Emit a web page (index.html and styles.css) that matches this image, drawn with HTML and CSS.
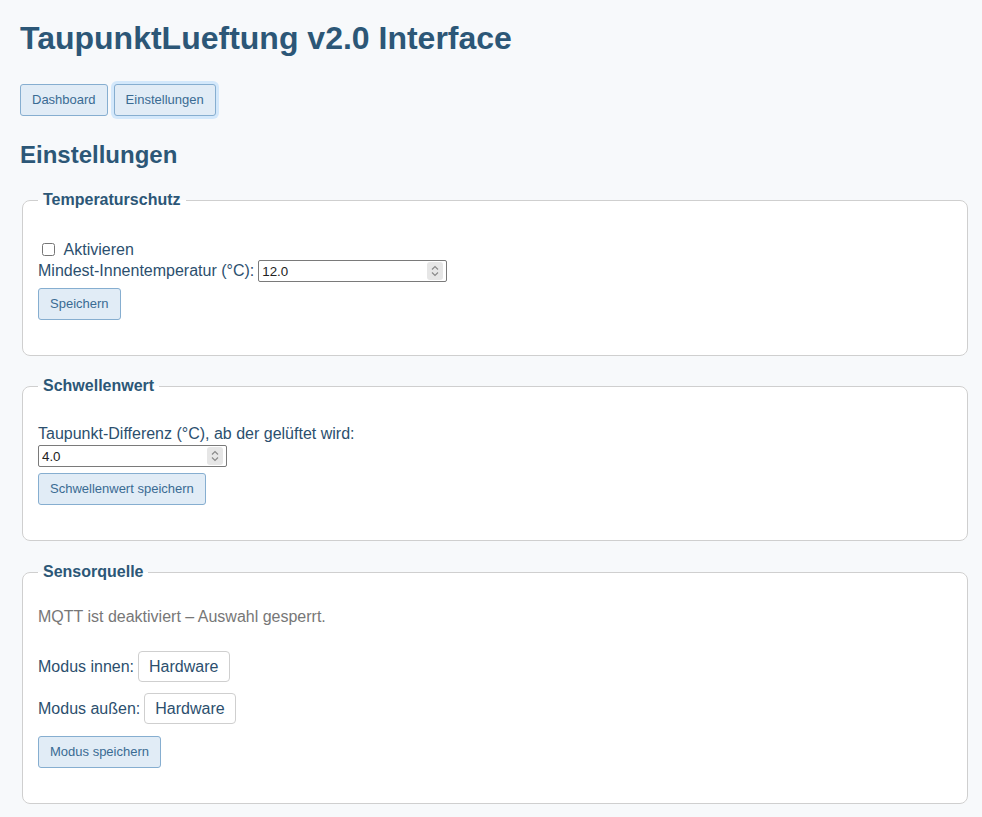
FILE: index.html
```html
<!DOCTYPE html>
<html lang="de">
<head>
<meta charset="utf-8">
<title>TaupunktLueftung v2.0 Interface</title>
<link rel="stylesheet" href="styles.css">
</head>
<body>
<h1 class="title">TaupunktLueftung v2.0 Interface</h1>
<nav class="nav">
  <button class="btn">Dashboard</button>
  <button class="btn btn-focus">Einstellungen</button>
</nav>
<h2 class="section-title">Einstellungen</h2>

<fieldset class="card">
  <legend class="card-legend">Temperaturschutz</legend>
  <div class="check-row"><label class="check-label"><input type="checkbox" class="check"> Aktivieren</label></div>
  <div class="field-row">
    <label class="field-label">Mindest-Innentemperatur (°C):</label>
    <span class="num"><input class="num-input" type="number" value="12.0" step="0.1"><span class="spin"><svg width="10" height="14" viewBox="0 0 10 14"><path d="M2 5.5 L5 2.5 L8 5.5" fill="none" stroke="#8a8a8a" stroke-width="1.2"/><path d="M2 8.5 L5 11.5 L8 8.5" fill="none" stroke="#8a8a8a" stroke-width="1.2"/></svg></span></span>
  </div>
  <button class="btn btn-save">Speichern</button>
</fieldset>

<fieldset class="card card-gap">
  <legend class="card-legend">Schwellenwert</legend>
  <label class="block-label">Taupunkt-Differenz (°C), ab der gelüftet wird:</label>
  <span class="num num-block"><input class="num-input" type="number" value="4.0" step="0.1"><span class="spin"><svg width="10" height="14" viewBox="0 0 10 14"><path d="M2 5.5 L5 2.5 L8 5.5" fill="none" stroke="#8a8a8a" stroke-width="1.2"/><path d="M2 8.5 L5 11.5 L8 8.5" fill="none" stroke="#8a8a8a" stroke-width="1.2"/></svg></span></span>
  <button class="btn btn-save">Schwellenwert speichern</button>
</fieldset>

<fieldset class="card">
  <legend class="card-legend">Sensorquelle</legend>
  <p class="note">MQTT ist deaktiviert – Auswahl gesperrt.</p>
  <div class="mode-row first"><label class="mode-label">Modus innen:</label><select class="mode" disabled><option>Hardware</option></select></div>
  <div class="mode-row"><label class="mode-label">Modus außen:</label><select class="mode" disabled><option>Hardware</option></select></div>
  <button class="btn btn-save btn-mode">Modus speichern</button>
</fieldset>
</body>
</html>
```

FILE: styles.css
```css
html { background: #f7f9fb; }
body {
  margin: 0;
  padding: 20px 12px 10px 20px;
  font-family: "Liberation Sans", Arial, sans-serif;
  font-size: 16px;
  color: #2c4f6e;
  background: #f7f9fb;
}
.title {
  margin: 0 0 27px;
  font-size: 32px;
  font-weight: bold;
  color: #2c5777;
}
.nav {
  display: flex;
  gap: 6px;
  margin-bottom: 25px;
}
.btn {
  font-family: "Liberation Sans", Arial, sans-serif;
  font-size: 13px;
  line-height: 14px;
  padding: 8px 11px;
  color: #3a6b93;
  background: #e1ecf6;
  border: 1px solid #86aed0;
  border-radius: 3px;
  cursor: pointer;
}
.btn-focus {
  box-shadow: 0 0 0 3px #d3e8fb;
}
.section-title {
  margin: 0 0 22px;
  font-size: 24px;
  font-weight: bold;
  color: #2c5777;
}
.card {
  margin: 0 2px 21px;
  padding: 0 15px 35px;
  border: 1px solid #cfcfcf;
  border-radius: 8px;
  background: #fff;
}
.card-gap { margin-bottom: 22px; }
.card-legend {
  padding: 0 5px;
  font-size: 16px;
  font-weight: bold;
  color: #2c5777;
}
.check-row { margin-top: 32px; }
.check-label { color: #2c4f6e; }
.check { margin: 0 5px 0 4px; width: 13px; height: 13px; vertical-align: -1px; }
.field-row { display: flex; align-items: center; gap: 4px; margin-top: 1px; height: 22px; }
.num { position: relative; display: inline-block; width: 189px; height: 22px; }
.num-block { display: block; margin-top: 2px; }
.num-input {
  box-sizing: border-box;
  width: 100%;
  height: 22px;
  padding: 0 20px 0 3px;
  font-family: "Liberation Sans", Arial, sans-serif;
  font-size: 13.33px;
  color: #222;
  background: #fff;
  border: 1px solid #7a7a7a;
  border-radius: 2px;
  -moz-appearance: textfield;
}
.num-input::-webkit-inner-spin-button,
.num-input::-webkit-outer-spin-button { -webkit-appearance: none; margin: 0; }
.spin {
  position: absolute;
  right: 4px;
  top: 2px;
  width: 16px;
  height: 18px;
  background: #e6e6e6;
  border-radius: 3px;
  display: flex;
  align-items: center;
  justify-content: center;
  pointer-events: none;
}
.btn-save { display: block; margin-top: 6px; }
.block-label { display: block; margin-top: 30px; }
.note { margin: 27px 0 0; color: #777; }
.mode-row { display: flex; align-items: center; gap: 4px; margin-top: 11px; }
.mode-row.first { margin-top: 25px; }
.mode {
  -webkit-appearance: none;
  appearance: none;
  height: 31px;
  padding: 0 10px;
  font-family: "Liberation Sans", Arial, sans-serif;
  font-size: 16px;
  color: #2c4f6e;
  background: #fff;
  border: 1px solid #cfcfcf;
  border-radius: 4px;
  opacity: 1;
}
.btn-mode { margin-top: 12px; }
```
